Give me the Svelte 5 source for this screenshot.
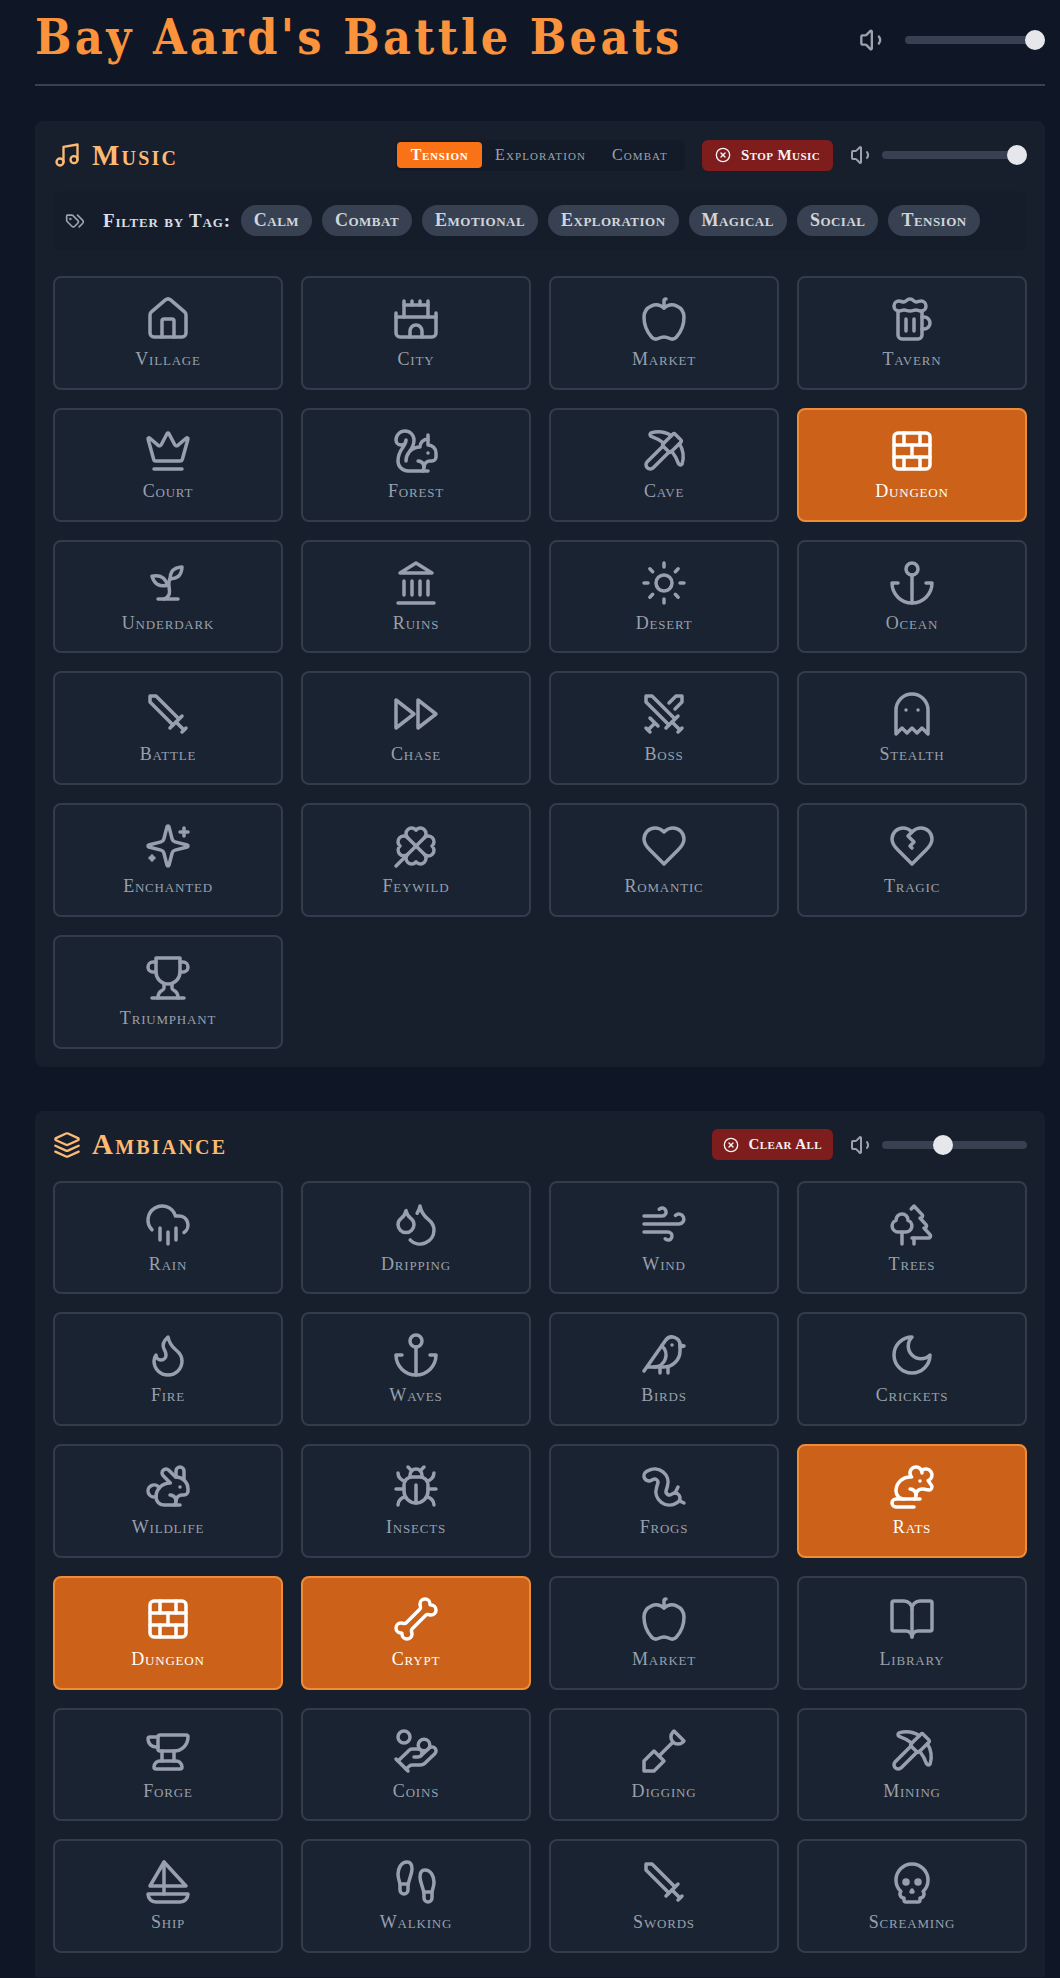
<script>
  const paths = {
    home: '<path d="M15 21v-8a1 1 0 0 0-1-1h-4a1 1 0 0 0-1 1v8"/><path d="M3 10a2 2 0 0 1 .709-1.528l7-5.999a2 2 0 0 1 2.582 0l7 5.999A2 2 0 0 1 21 10v9a2 2 0 0 1-2 2H5a2 2 0 0 1-2-2z"/>',
    castle: '<path d="M10 5V3"/><path d="M14 5V3"/><path d="M15 21v-3a3 3 0 0 0-6 0v3"/><path d="M18 3v8"/><path d="M18 5H6"/><path d="M22 11H2"/><path d="M22 9v10a2 2 0 0 1-2 2H4a2 2 0 0 1-2-2V9"/><path d="M6 3v8"/>',
    apple: '<path d="M12 6.528V3a1 1 0 0 1 1-1h0"/><path d="M18.237 21A15 15 0 0 0 22 11a6 6 0 0 0-10-4.472A6 6 0 0 0 2 11a15.1 15.1 0 0 0 3.763 10 3 3 0 0 0 3.648.648 5.5 5.5 0 0 1 5.178 0A3 3 0 0 0 18.237 21"/>',
    beer: '<path d="M17 11h1a3 3 0 0 1 0 6h-1"/><path d="M9 12v6"/><path d="M13 12v6"/><path d="M14 7.5c-1 0-1.44.5-3 .5s-2-.5-3-.5-1.72.5-2.5.5a2.5 2.5 0 0 1 0-5c.78 0 1.57.5 2.5.5S9.44 2 11 2s2 1.5 3 1.5 1.72-.5 2.5-.5a2.5 2.5 0 0 1 0 5c-.78 0-1.5-.5-2.5-.5Z"/><path d="M5 8v12a2 2 0 0 0 2 2h8a2 2 0 0 0 2-2V8"/>',
    crown: '<path d="M11.562 3.266a.5.5 0 0 1 .876 0L15.39 8.87a1 1 0 0 0 1.516.294L21.183 5.5a.5.5 0 0 1 .798.519l-2.834 10.246a1 1 0 0 1-.956.734H5.81a1 1 0 0 1-.957-.734L2.02 6.02a.5.5 0 0 1 .798-.519l4.276 3.664a1 1 0 0 0 1.516-.294z"/><path d="M5 21h14"/>',
    squirrel: '<path d="M15.236 22a3 3 0 0 0-2.2-5"/><path d="M16 20a3 3 0 0 1 3-3h1a2 2 0 0 0 2-2v-2a4 4 0 0 0-4-4V4"/><path d="M18 13h.01"/><path d="M18 6a4 4 0 0 0-4 4 7 7 0 0 0-7 7c0-5 4-5 4-10.5a4.5 4.5 0 1 0-9 0 2.5 2.5 0 0 0 5 0C7 10 3 11 3 17c0 2.8 2.2 5 5 5h10"/>',
    pickaxe: '<path d="M14.531 12.469 6.619 20.38a1 1 0 1 1-3-3l7.912-7.912"/><path d="M15.686 4.314A12.5 12.5 0 0 0 5.461 2.958 1 1 0 0 0 5.58 4.71a22 22 0 0 1 6.318 3.393"/><path d="M17.7 3.7a1 1 0 0 0-1.4 0l-4.6 4.6a1 1 0 0 0 0 1.4l2.6 2.6a1 1 0 0 0 1.4 0l4.6-4.6a1 1 0 0 0 0-1.4z"/><path d="M19.686 8.314a12.501 12.501 0 0 1 1.356 10.225 1 1 0 0 1-1.751-.119 22 22 0 0 0-3.393-6.319"/>',
    brick: '<rect width="18" height="18" x="3" y="3" rx="2"/><path d="M12 9v6"/><path d="M16 15v6"/><path d="M16 3v6"/><path d="M3 15h18"/><path d="M3 9h18"/><path d="M8 15v6"/><path d="M8 3v6"/>',
    sprout: '<path d="M7 20h10"/><path d="M10 20c5.5-2.5.8-6.4 3-10"/><path d="M9.5 9.4c1.1.8 1.8 2.2 2.3 3.7-2 .4-3.5.4-4.8-.3-1.2-.6-2.3-1.9-3-4.2 2.8-.5 4.4 0 5.5.8z"/><path d="M14.1 6a7 7 0 0 0-1.1 4c1.9-.1 3.3-.6 4.3-1.4 1-1 1.6-2.3 1.7-4.6-2.7.1-4 1-4.9 2z"/>',
    landmark: '<path d="M3 22h18"/><path d="M6 18v-7"/><path d="M10 18v-7"/><path d="M14 18v-7"/><path d="M18 18v-7"/><path d="M12 2l8 5H4z"/>',
    sun: '<circle cx="12" cy="12" r="4"/><path d="M12 2v2"/><path d="M12 20v2"/><path d="m4.93 4.93 1.41 1.41"/><path d="m17.66 17.66 1.41 1.41"/><path d="M2 12h2"/><path d="M20 12h2"/><path d="m6.34 17.66-1.41 1.41"/><path d="m19.07 4.93-1.41 1.41"/>',
    anchor: '<path d="M12 22V8"/><path d="M5 12H2a10 10 0 0 0 20 0h-3"/><circle cx="12" cy="5" r="3"/>',
    sword: '<path d="M14.5 17.5 3 6V3h3l11.5 11.5"/><path d="M13 19l6-6"/><path d="M16 16l4 4"/><path d="M19 21l2-2"/>',
    chase: '<path d="M13 19l9-7-9-7z"/><path d="M2 19l9-7-9-7z"/>',
    swords: '<path d="M14.5 17.5 3 6V3h3l11.5 11.5"/><path d="M13 19l6-6"/><path d="M16 16l4 4"/><path d="M19 21l2-2"/><path d="M14.5 6.5 18 3h3v3l-3.5 3.5"/><path d="M5 14l4 4"/><path d="M7 17l-3 3"/><path d="M3 19l2 2"/>',
    ghost: '<path d="M9 10h.01"/><path d="M15 10h.01"/><path d="M12 2a8 8 0 0 0-8 8v12l3-3 2.5 2.5L12 19l2.5 2.5L17 19l3 3V10a8 8 0 0 0-8-8z"/>',
    sparkles: '<path d="M9.937 15.5A2 2 0 0 0 8.5 14.063l-6.135-1.582a.5.5 0 0 1 0-.962L8.5 9.936A2 2 0 0 0 9.937 8.5l1.582-6.135a.5.5 0 0 1 .963 0L14.063 8.5A2 2 0 0 0 15.5 9.937l6.135 1.581a.5.5 0 0 1 0 .964L15.5 14.063a2 2 0 0 0-1.437 1.437l-1.582 6.135a.5.5 0 0 1-.963 0z"/><path d="M20 3v4"/><path d="M22 5h-4"/><path d="M4 17v2"/><path d="M5 18H3"/>',
    clover: '<path d="M16.17 7.83 2 22"/><path d="M4.02 12a2.827 2.827 0 1 1 3.81-4.17A2.827 2.827 0 1 1 12 4.02a2.827 2.827 0 1 1 4.17 3.81A2.827 2.827 0 1 1 19.98 12a2.827 2.827 0 1 1-3.81 4.17A2.827 2.827 0 1 1 12 19.98a2.827 2.827 0 1 1-4.17-3.81A1 1 0 1 1 4 12"/><path d="m7.83 7.83 8.34 8.34"/>',
    heart: '<path d="M19 14c1.49-1.46 3-3.21 3-5.5A5.5 5.5 0 0 0 16.5 3c-1.76 0-3 .5-4.5 2-1.5-1.5-2.74-2-4.5-2A5.5 5.5 0 0 0 2 8.5c0 2.3 1.5 4.05 3 5.5l7 7Z"/>',
    crack: '<path d="M19 14c1.49-1.46 3-3.21 3-5.5A5.5 5.5 0 0 0 16.5 3c-1.76 0-3 .5-4.5 2-1.5-1.5-2.74-2-4.5-2A5.5 5.5 0 0 0 2 8.5c0 2.3 1.5 4.05 3 5.5l7 7Z"/><path d="m12 13-1-1 2-2-3-3 2-2"/>',
    trophy: '<path d="M6 9H4.5a2.5 2.5 0 0 1 0-5H6"/><path d="M18 9h1.5a2.5 2.5 0 0 0 0-5H18"/><path d="M4 22h16"/><path d="M10 14.66V17c0 .55-.47.98-.97 1.21C7.85 18.75 7 20.24 7 22"/><path d="M14 14.66V17c0 .55.47.98.97 1.21C16.15 18.75 17 20.24 17 22"/><path d="M18 2H6v7a6 6 0 0 0 12 0V2Z"/>',
    rain: '<path d="M4 14.899A7 7 0 1 1 15.71 8h1.79a4.5 4.5 0 0 1 2.5 8.242"/><path d="M16 14v6"/><path d="M8 14v6"/><path d="M12 16v6"/>',
    droplets: '<path d="M7 16.3c2.2 0 4-1.83 4-4.05 0-1.16-.57-2.26-1.71-3.19S7.29 6.75 7 5.3c-.29 1.45-1.14 2.84-2.29 3.76S3 11.1 3 12.25c0 2.22 1.8 4.05 4 4.05z"/><path d="M12.56 6.6A10.97 10.97 0 0 0 14 3.02c.5 2.5 2 4.9 4 6.5s3 3.5 3 5.5a6.98 6.98 0 0 1-11.91 4.97"/>',
    wind: '<path d="M17.7 7.7a2.5 2.5 0 1 1 1.8 4.3H2"/><path d="M9.6 4.6A2 2 0 1 1 11 8H2"/><path d="M12.6 19.4A2 2 0 1 0 14 16H2"/>',
    trees: '<path d="M10 10v.2A3 3 0 0 1 8.9 16H5a3 3 0 0 1-1-5.8V10a3 3 0 0 1 6 0Z"/><path d="M7 16v6"/><path d="M13 19v3"/><path d="M12 19h8.3a1 1 0 0 0 .7-1.7L18 14h.3a1 1 0 0 0 .7-1.7L16 9h.2a1 1 0 0 0 .8-1.7L13 3l-1.4 1.5"/>',
    flame: '<path d="M8.5 14.5A2.5 2.5 0 0 0 11 12c0-1.38-.5-2-1-3-1.072-2.143-.224-4.054 2-6 .5 2.5 2 4.9 4 6.5 2 1.6 3 3.5 3 5.5a7 7 0 1 1-14 0c0-1.153.433-2.294 1-3a2.5 2.5 0 0 0 2.5 2.5z"/>',
    bird: '<path d="M16 7h.01"/><path d="M3.4 18H12a8 8 0 0 0 8-8V7a4 4 0 0 0-7.28-2.3L2 20"/><path d="m20 7 2 .5-2 .5"/><path d="M10 18v3"/><path d="M14 17.75V21"/><path d="M7 18a6 6 0 0 0 3.84-10.61"/>',
    moon: '<path d="M12 3a6 6 0 0 0 9 9 9 9 0 1 1-9-9Z"/>',
    rabbit: '<path d="M13 16a3 3 0 0 1 2.24 5"/><path d="M18 12h.01"/><path d="M18 21h-8a4 4 0 0 1-4-4 7 7 0 0 1 7-7h.2L9.6 6.4a1 1 0 1 1 2.8-2.8L15.8 7h.2c3.3 0 6 2.7 6 6v1a2 2 0 0 1-2 2h-1a3 3 0 0 0-3 3"/><path d="M20 8.54V4a2 2 0 1 0-4 0v3"/><path d="M7.612 12.524a3 3 0 1 0-1.6 4.3"/>',
    bug: '<path d="m8 2 1.88 1.88"/><path d="M14.12 3.88 16 2"/><path d="M9 7.13v-1a3.003 3.003 0 1 1 6 0v1"/><path d="M12 20c-3.3 0-6-2.7-6-6v-3a4 4 0 0 1 4-4h4a4 4 0 0 1 4 4v3c0 3.3-2.7 6-6 6"/><path d="M12 20v-9"/><path d="M6.53 9C4.6 8.8 3 7.1 3 5"/><path d="M6 13H2"/><path d="M3 21c0-2.1 1.7-3.9 3.8-4"/><path d="M20.97 5c0 2.1-1.6 3.8-3.5 4"/><path d="M22 13h-4"/><path d="M17.2 17c2.1.1 3.8 1.9 3.8 4"/>',
    worm: '<path d="m19 12-1.5 3"/><path d="M19.63 18.81 22 20"/><path d="M6.47 8.23a1.68 1.68 0 0 1 2.44 1.93l-.64 2.08a6.76 6.76 0 0 0 10.16 7.67l.42-.27a1 1 0 1 0-2.73-4.21l-.42.27a1.76 1.76 0 0 1-2.63-1.99l.64-2.08A6.66 6.66 0 0 0 3.94 3.9l-.7.4a1 1 0 1 0 2.55 4.34z"/>',
    rat: '<path d="M13 22H4a2 2 0 0 1 0-4h12"/><path d="M13.236 18a3 3 0 0 0-2.2-5"/><path d="M16 9h.01"/><path d="M16.82 3.94a3 3 0 1 1 3.237 4.868l1.815 2.587a1.5 1.5 0 0 1-1.5 2.1l-2.872-.453a3 3 0 0 0-3.5 3"/><path d="M17 4.988a3 3 0 1 0-5.2 2.052A7 7 0 0 0 4 14.015 4 4 0 0 0 8 18"/>',
    bone: '<path d="M17 10c.7-.7 1.69 0 2.5 0a2.5 2.5 0 1 0 0-5 .5.5 0 0 1-.5-.5 2.5 2.5 0 1 0-5 0c0 .81.7 1.8 0 2.5l-7 7c-.7.7-1.69 0-2.5 0a2.5 2.5 0 0 0 0 5c.28 0 .5.22.5.5a2.5 2.5 0 1 0 5 0c0-.81-.7-1.8 0-2.5Z"/>',
    book: '<path d="M12 7v14"/><path d="M3 18a1 1 0 0 1-1-1V4a1 1 0 0 1 1-1h5a4 4 0 0 1 4 4 4 4 0 0 1 4-4h5a1 1 0 0 1 1 1v13a1 1 0 0 1-1 1h-6a3 3 0 0 0-3 3 3 3 0 0 0-3-3z"/>',
    anvil: '<path d="M7 10H6a4 4 0 0 1-4-4 1 1 0 0 1 1-1h4"/><path d="M7 5a1 1 0 0 1 1-1h13a1 1 0 0 1 1 1 7 7 0 0 1-7 7H8a1 1 0 0 1-1-1z"/><path d="M9 12v5"/><path d="M15 12v5"/><path d="M5 20a3 3 0 0 1 3-3h8a3 3 0 0 1 3 3 1 1 0 0 1-1 1H6a1 1 0 0 1-1-1"/>',
    coins: '<path d="M11 15h2a2 2 0 1 0 0-4h-3c-.6 0-1.1.2-1.4.6L3 17"/><path d="m7 21 1.6-1.4c.3-.4.8-.6 1.4-.6h4c1.1 0 2.1-.4 2.8-1.2l4.6-4.4a2 2 0 0 0-2.75-2.91l-4.2 3.9"/><path d="m2 16 6 6"/><circle cx="16" cy="9" r="2.9"/><circle cx="6" cy="5" r="3"/>',
    shovel: '<path d="M2 22v-5l5-5 5 5-5 5z"/><path d="M9.5 14.5 16 8"/><path d="m17 2 5 5-.5.5a3.53 3.53 0 0 1-5 0s0 0 0 0a3.53 3.53 0 0 1 0-5L17 2"/>',
    boat: '<path d="M22 18H2a4 4 0 0 0 4 4h12a4 4 0 0 0 4-4Z"/><path d="M21 14 10 2 3 14h18Z"/><path d="M10 2v16"/>',
    feet: '<path d="M4 16v-2.38C4 11.5 2.97 10.5 3 8c.03-2.72 1.49-6 4.5-6C9.37 2 10 3.8 10 5.5c0 3.11-2 5.66-2 8.68V16a2 2 0 1 1-4 0Z"/><path d="M20 20v-2.38c0-2.12 1.03-3.12 1-5.62-.03-2.72-1.49-6-4.5-6C14.63 6 14 7.8 14 9.5c0 3.11 2 5.66 2 8.68V20a2 2 0 1 0 4 0Z"/><path d="M16 17h4"/><path d="M4 13h4"/>',
    skull: '<path d="m12.5 17-.5-1-.5 1h1z"/><path d="M15 22a1 1 0 0 0 1-1v-1a2 2 0 0 0 1.56-3.25 8 8 0 1 0-11.12 0A2 2 0 0 0 8 20v1a1 1 0 0 0 1 1z"/><circle cx="15" cy="12" r="1"/><circle cx="9" cy="12" r="1"/>',
    music: '<path d="M9 18V5l12-2v13"/><circle cx="6" cy="18" r="3"/><circle cx="18" cy="16" r="3"/>',
    layers: '<path d="m12.83 2.18a2 2 0 0 0-1.66 0L2.6 6.08a1 1 0 0 0 0 1.83l8.58 3.91a2 2 0 0 0 1.66 0l8.58-3.9a1 1 0 0 0 0-1.83Z"/><path d="m22 17.65-9.17 4.16a2 2 0 0 1-1.66 0L2 17.65"/><path d="m22 12.65-9.17 4.16a2 2 0 0 1-1.66 0L2 12.65"/>',
    tags: '<path d="m15 5 6.3 6.3a2.4 2.4 0 0 1 0 3.4L17 19"/><path d="M9.586 5.586A2 2 0 0 0 8.172 5H3a1 1 0 0 0-1 1v5.172a2 2 0 0 0 .586 1.414L8.29 18.29a2.426 2.426 0 0 0 3.42 0l3.58-3.58a2.426 2.426 0 0 0 0-3.42z"/><circle cx="6.5" cy="9.5" r=".5" fill="currentColor"/>',
    volume: '<path d="M11 4.702a.705.705 0 0 0-1.203-.498L6.413 7.587A1.4 1.4 0 0 1 5.416 8H3a1 1 0 0 0-1 1v6a1 1 0 0 0 1 1h2.416a1.4 1.4 0 0 1 .997.413l3.383 3.384A.705.705 0 0 0 11 19.298z"/><path d="M17 9a5 5 0 0 1 0 6"/>',
    stop: '<circle cx="12" cy="12" r="10"/><path d="m15 9-6 6"/><path d="m9 9 6 6"/>'
  }

  const tags = ['Calm', 'Combat', 'Emotional', 'Exploration', 'Magical', 'Social', 'Tension']
  const music = [
    ['Village', 'home'], ['City', 'castle'], ['Market', 'apple'], ['Tavern', 'beer'],
    ['Court', 'crown'], ['Forest', 'squirrel'], ['Cave', 'pickaxe'], ['Dungeon', 'brick', true],
    ['Underdark', 'sprout'], ['Ruins', 'landmark'], ['Desert', 'sun'], ['Ocean', 'anchor'],
    ['Battle', 'sword'], ['Chase', 'chase'], ['Boss', 'swords'], ['Stealth', 'ghost'],
    ['Enchanted', 'sparkles'], ['Feywild', 'clover'], ['Romantic', 'heart'], ['Tragic', 'crack'],
    ['Triumphant', 'trophy']
  ]
  const ambiance = [
    ['Rain', 'rain'], ['Dripping', 'droplets'], ['Wind', 'wind'], ['Trees', 'trees'],
    ['Fire', 'flame'], ['Waves', 'anchor'], ['Birds', 'bird'], ['Crickets', 'moon'],
    ['Wildlife', 'rabbit'], ['Insects', 'bug'], ['Frogs', 'worm'], ['Rats', 'rat', true],
    ['Dungeon', 'brick', true], ['Crypt', 'bone', true], ['Market', 'apple'], ['Library', 'book'],
    ['Forge', 'anvil'], ['Coins', 'coins'], ['Digging', 'shovel'], ['Mining', 'pickaxe'],
    ['Ship', 'boat'], ['Walking', 'feet'], ['Swords', 'sword'], ['Screaming', 'skull']
  ]
</script>

{#snippet icon(name, cls)}
  <svg class={cls} viewBox="0 0 24 24" fill="none" stroke="currentColor" stroke-linecap="round" stroke-linejoin="round">{@html paths[name]}</svg>
{/snippet}

{#snippet volume(pos, cls)}
  <div class="volume {cls}">
    {@render icon('volume', 'vol-icon')}
    <div class="track"><span class="thumb" style="left: {pos}%"></span></div>
  </div>
{/snippet}

{#snippet grid(items)}
  <div class="grid">
    {#each items as [label, name, active]}
      <button class="sound" class:active>
        {@render icon(name, 'sound-icon')}
        <span>{label}</span>
      </button>
    {/each}
  </div>
{/snippet}

<div class="page">
  <header class="top">
    <h1>Bay Aard's Battle Beats</h1>
    {@render volume(100, 'master')}
  </header>

  <section class="panel">
    <div class="panel-head">
      <h2>{@render icon('music', 'head-icon')}Music</h2>
      <div class="controls">
        <div class="segments">
          <button class="seg on">Tension</button>
          <button class="seg">Exploration</button>
          <button class="seg">Combat</button>
        </div>
        <button class="stop">{@render icon('stop', 'stop-icon')}Stop Music</button>
        {@render volume(100, 'small')}
      </div>
    </div>
    <div class="filter">
      {@render icon('tags', 'tag-icon')}
      <span class="filter-label">Filter by Tag:</span>
      {#each tags as tag}
        <button class="tag">{tag}</button>
      {/each}
    </div>
    {@render grid(music)}
  </section>

  <section class="panel second">
    <div class="panel-head">
      <h2>{@render icon('layers', 'head-icon')}Ambiance</h2>
      <div class="controls">
        <button class="stop tight">{@render icon('stop', 'stop-icon')}Clear All</button>
        {@render volume(49, 'small')}
      </div>
    </div>
    {@render grid(ambiance)}
  </section>
</div>

<style>
  :global(body) {
    margin: 0;
    background: #0f1726;
  }

  .page {
    padding: 0 15px 0 35px;
    font-family: "Liberation Serif", serif;
    font-variant: small-caps;
    color: #e5e7eb;
  }

  button {
    font: inherit;
    font-variant: inherit;
    border: 0;
    cursor: pointer;
  }

  .top {
    height: 86px;
    box-sizing: border-box;
    padding-bottom: 4px;
    display: flex;
    align-items: center;
    justify-content: space-between;
    border-bottom: 2px solid #374151;
  }

  h1 {
    margin: 0 0 7px;
    font-family: "DejaVu Serif Condensed", "DejaVu Serif", serif;
    font-variant: normal;
    font-weight: 700;
    font-size: 48px;
    letter-spacing: 3.33px;
    color: #fb923c;
    white-space: nowrap;
  }

  .volume {
    display: flex;
    align-items: center;
    color: #9ca3af;
  }

  .master {
    width: 186px;
    gap: 18px;
  }

  .small {
    width: 177px;
    gap: 8px;
  }

  :global(.vol-icon) {
    width: 24px;
    height: 24px;
    flex: none;
    stroke-width: 2;
  }

  .master :global(.vol-icon) {
    width: 28px;
    height: 28px;
  }

  .track {
    position: relative;
    flex: 1;
    height: 8px;
    border-radius: 4px;
    background: #374151;
  }

  .thumb {
    position: absolute;
    top: -6px;
    width: 20px;
    height: 20px;
    margin-left: -20px;
    border-radius: 50%;
    background: #e5e7eb;
  }

  .panel {
    margin-top: 35px;
    padding: 18px;
    border-radius: 8px;
    background: #171f2d;
  }

  .second {
    margin-top: 44px;
    padding-bottom: 24px;
    border-radius: 8px 8px 0 0;
  }

  .panel-head {
    display: flex;
    align-items: center;
    justify-content: space-between;
    height: 32px;
    margin-bottom: 20px;
  }

  h2 {
    display: flex;
    align-items: center;
    gap: 11px;
    margin: 0;
    font-size: 29px;
    font-weight: 700;
    letter-spacing: 2.2px;
    color: #fdba74;
  }

  :global(.head-icon) {
    width: 28px;
    height: 28px;
    stroke-width: 2;
  }

  .controls {
    display: flex;
    align-items: center;
    gap: 17px;
  }

  .segments {
    display: flex;
    width: 290px;
    height: 31px;
    box-sizing: border-box;
    align-items: center;
    padding: 0 2px;
    border-radius: 6px;
    background: #141b28;
  }

  .seg {
    height: 26px;
    padding: 0 13px;
    border-radius: 4px;
    background: none;
    font-size: 16px;
    letter-spacing: 1.1px;
    color: #9ca3af;
  }

  .seg.on {
    flex: none;
    width: 85px;
    padding: 0;
    background: #f97316;
    color: #fff;
    font-weight: 700;
    letter-spacing: 0.7px;
  }

  .stop {
    display: flex;
    align-items: center;
    gap: 10px;
    height: 31px;
    padding: 0 13px;
    border-radius: 6px;
    background: #7f1d1d;
    font-size: 15px;
    font-weight: 700;
    letter-spacing: 0.4px;
    color: #f3f4f6;
  }

  .tight {
    padding: 0 11px;
  }

  :global(.stop-icon) {
    width: 16px;
    height: 16px;
    stroke-width: 2;
  }

  .filter {
    display: flex;
    align-items: center;
    gap: 10px;
    height: 59px;
    padding: 0 12px;
    margin-bottom: 26px;
    border-radius: 8px;
    background: #151d2a;
  }

  :global(.tag-icon) {
    width: 20px;
    height: 20px;
    margin-right: 8px;
    color: #9ca3af;
    stroke-width: 2;
  }

  .filter-label {
    font-size: 19px;
    font-weight: 700;
    letter-spacing: 0.8px;
    color: #d9dde5;
  }

  .tag {
    height: 31px;
    padding: 0 13px;
    border-radius: 16px;
    background: #374151;
    font-size: 18px;
    font-weight: 700;
    letter-spacing: 0.48px;
    color: #d1d5db;
  }

  .grid {
    display: grid;
    grid-template-columns: repeat(4, 1fr);
    grid-auto-rows: 113.75px;
    gap: 18px;
  }

  .sound {
    display: flex;
    flex-direction: column;
    align-items: center;
    justify-content: flex-start;
    box-sizing: border-box;
    padding: 17px 0 0;
    border: 2px solid #323c4c;
    border-radius: 8px;
    background: #1a2331;
    font-size: 18px;
    letter-spacing: 0.8px;
    color: #98a0ad;
  }

  .sound span {
    margin-top: 6px;
    line-height: 20px;
  }

  :global(.sound-icon) {
    width: 48px;
    height: 48px;
    stroke-width: 1.75;
  }

  .sound.active {
    border-color: #f08c38;
    background: #cc6219;
    color: #fff;
  }
</style>
